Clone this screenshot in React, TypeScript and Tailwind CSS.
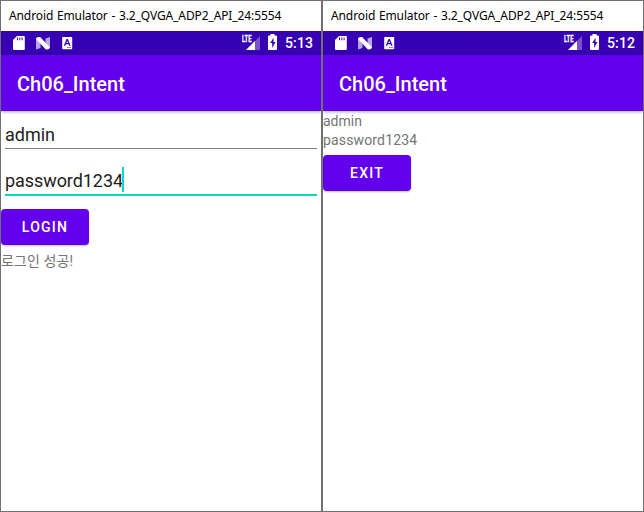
import type { ReactNode } from "react";

function StatusBar({ time }: { time: string }) {
  return (
    <div className="flex h-6 shrink-0 items-start bg-[#3700b3] text-white">
      <svg className="h-6 w-20 shrink-0" viewBox="0 0 80 24" fill="white">
        <path fillRule="evenodd" d="M16 5h6.800q1 0 1 1v12q0 1-1 1H13q-1 0-1-1V9zM16 6.500v2.700h1V6.500zm2.300 0v2.700h1V6.500zm2.300 0v2.700h1V6.500z" />
        <path d="M35 7.500l4.500-1.500v11L35 18.500zM44.500 7.500L49 6v11l-4.500 1.500z" opacity=".65" />
        <path d="M35 8q.8-2.500 3.500-2 1 .2 1.800 1.200L49 16.200q-.8 2.600-3.800 2.100-.8-.2-1.500-1z" />
        <path fillRule="evenodd" d="M62 6h8.400q.8 0 .8.8v10.600q0 .8-.8.8H62q-.8 0-.8-.8V6.800q0-.8.8-.8zm3.500 2-2.700 6.700h1.500l.5-1.400h2.800l.5 1.400h1.500L66.900 8zm.7 1.700.9 2.400h-1.800zM66.300 15.900v1h1.100v-1zm2.200 0v1h1.100v-1z" />
      </svg>
      <div className="flex-1" />
      <svg className="h-6 w-10 shrink-0" viewBox="4 0 40 24" fill="white">
        <text x="5" y="11" fontSize="9" fontWeight="700" stroke="white" strokeWidth="0.3" textLength="9.5" lengthAdjust="spacingAndGlyphs" className="font-['Roboto',sans-serif]">LTE</text>
        <path d="M23 5v14H9l6.500-6.500V11H17z" opacity=".32" />
        <path d="M18 10v9H9z" />
        <path fillRule="evenodd" d="M33.500 3h4v1.500H39q1 0 1 1V18q0 1-1 1h-7q-1 0-1-1V5.500q0-1 1-1h1.500zM36.500 6.800l-3.300 5.200h2v5l3.300-5.900h-2z" />
      </svg>
      <span className="mr-2 ml-1 pt-0.5 font-['Roboto',sans-serif] text-[14px] leading-5 font-medium tracking-[0.1px]">{time}</span>
    </div>
  );
}

function EmulatorWindow({ time, children }: { time: string; children: ReactNode }) {
  return (
    <section className="flex h-[512px] w-[322px] flex-col overflow-hidden border border-[#707070] bg-white">
      <header className="h-[30px] shrink-0 pl-2 font-['Noto_Sans',sans-serif] text-[12px] leading-[29px] tracking-[-0.11px] [word-spacing:0.75px] whitespace-nowrap text-black">
        Android Emulator - 3.2_QVGA_ADP2_API_24:5554
      </header>
      <StatusBar time={time} />
      <div className="h-14 shrink-0 bg-[#6200ee] pl-4 font-['Roboto',sans-serif] text-[20px] leading-[58px] font-medium text-white shadow-[0_1px_3px_rgba(0,0,0,0.35)]">
        Ch06_Intent
      </div>
      <main className="font-['Roboto','Noto_Sans_CJK_KR',sans-serif]">{children}</main>
    </section>
  );
}

function MaterialButton({ children }: { children: ReactNode }) {
  return (
    <button className="flex h-9 w-[88px] items-center justify-center rounded bg-[#6200ee] text-[14px] font-medium tracking-[1.25px] text-white shadow-[0_1px_2px_rgba(0,0,0,0.25)]">
      {children}
    </button>
  );
}

export default function App() {
  return (
    <div className="flex h-[512px] w-[644px] overflow-hidden bg-white">
      <EmulatorWindow time="5:13">
        <div className="mx-1 h-[38px] border-b border-[#808080] pt-[11px] text-[18px] leading-[25px] text-[#212121]">admin</div>
        <div className="mx-1 flex h-[47px] items-start border-b-2 border-[#03dac5] pt-[19px] text-[18px] leading-[25px] tracking-[-0.07px] text-[#212121]">
          <span>password1234</span>
          <span className="-mt-px -ml-px h-[25px] w-0.5 bg-[#03dac5]" />
        </div>
        <div className="mt-[13px]">
          <MaterialButton>LOGIN</MaterialButton>
        </div>
        <p className="mt-[6px] text-[14px] leading-5 tracking-[0.12px] text-[#757575]">로그인 성공!</p>
      </EmulatorWindow>
      <EmulatorWindow time="5:12">
        <p className="pt-px text-[14px] leading-[19px] text-[#757575]">admin</p>
        <p className="text-[14px] leading-[19px] tracking-[0.15px] text-[#757575]">password1234</p>
        <div className="mt-[5px]">
          <MaterialButton>EXIT</MaterialButton>
        </div>
      </EmulatorWindow>
    </div>
  );
}
